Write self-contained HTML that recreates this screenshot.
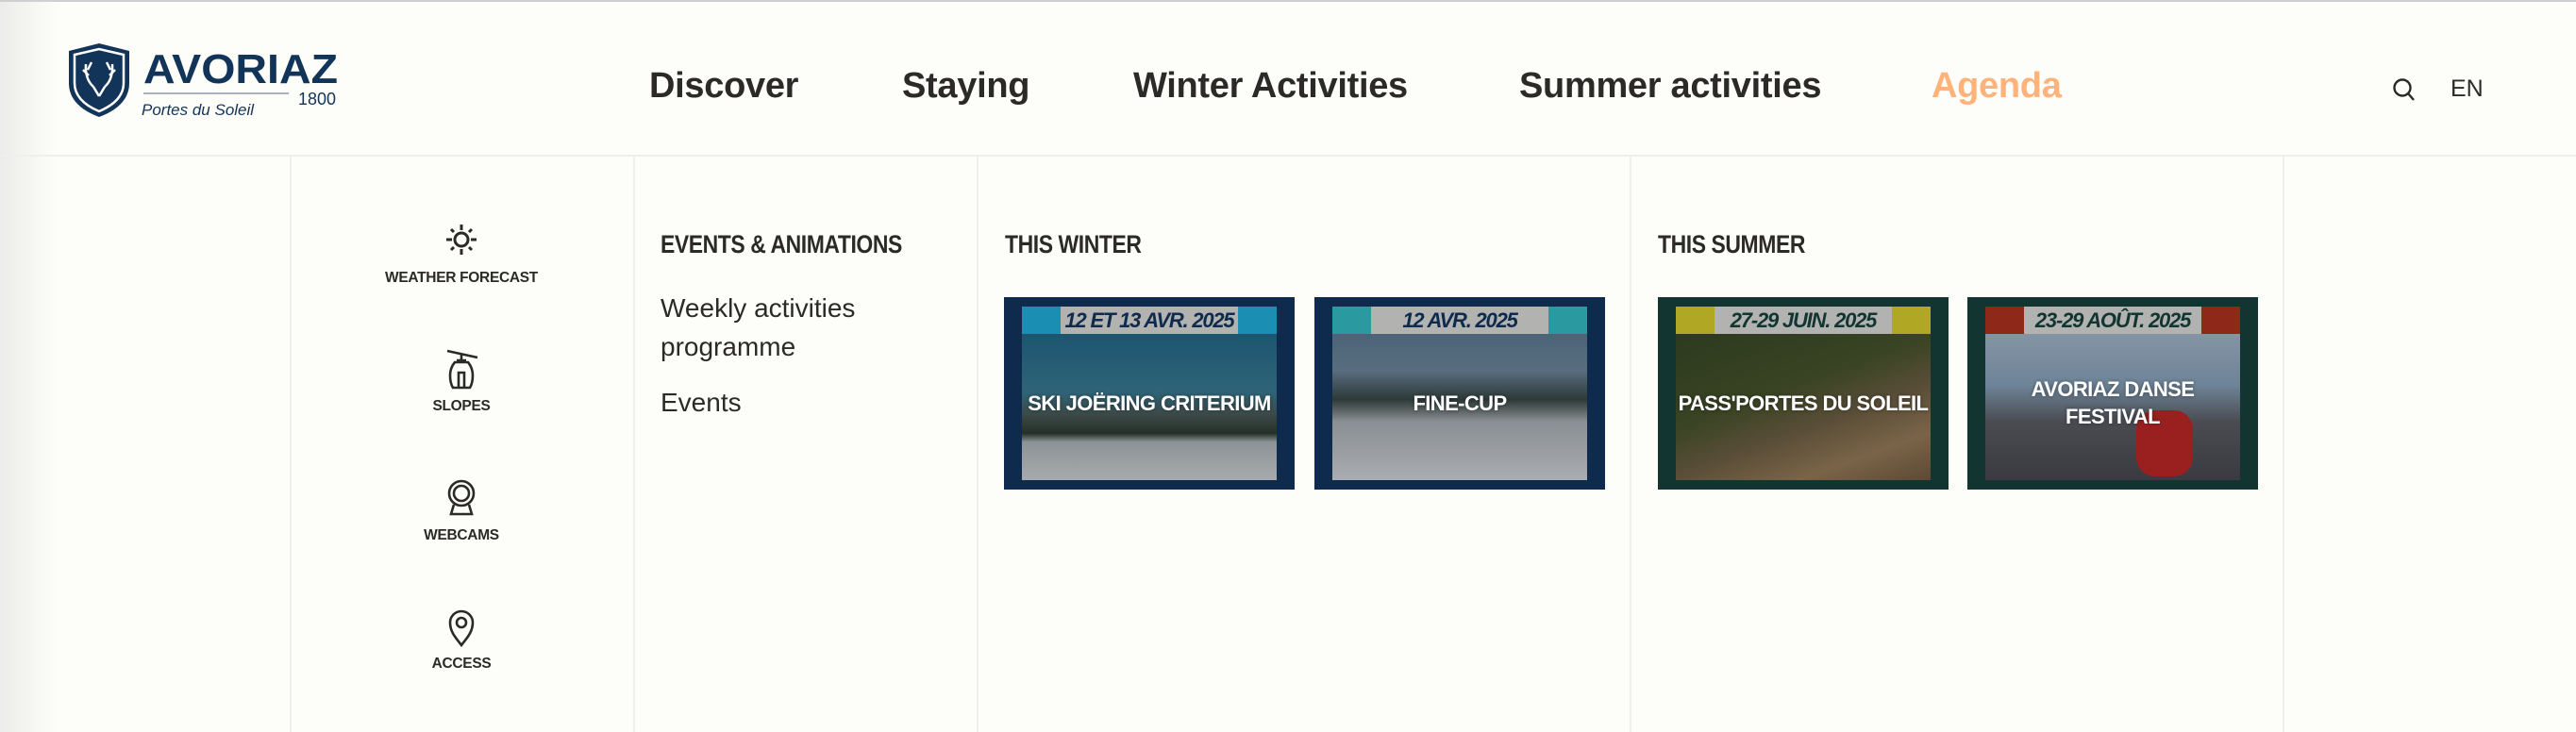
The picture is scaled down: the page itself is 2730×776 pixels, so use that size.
<!DOCTYPE html>
<html><head><meta charset="utf-8"><style>
*{margin:0;padding:0;box-sizing:border-box}
body{width:2730px;height:776px;background:#fdfdf9;font-family:"Liberation Sans",sans-serif;color:#2b2a28;position:relative;overflow:hidden}
.a{position:absolute}
.nav{top:70px;font-size:38px;font-weight:bold;letter-spacing:-0.3px;white-space:nowrap}
.vl{position:absolute;top:165px;bottom:0;width:2px;background:#efefeb}
.lab{position:absolute;width:300px;left:339px;text-align:center;font-size:15.5px;font-weight:bold;letter-spacing:-0.3px}
.ico{position:absolute;left:465px;width:48px;height:48px}
.hd{font-family:"Liberation Sans Narrow","Liberation Sans",sans-serif;font-weight:bold;font-size:27px;letter-spacing:-0.5px;transform:scaleX(.85);transform-origin:left}
.lk{font-size:28px;left:700px}
.card{position:absolute;top:315px;width:308px;height:204px;padding:10px 19px}
.inner{position:relative;width:100%;height:100%;overflow:hidden}
.bar{position:absolute;left:0;right:0;top:0;height:29px}
.date{position:absolute;top:0;height:29px;left:50%;transform:translateX(-50%);width:188px;background:#b2b2b0;text-align:center;font-style:italic;font-weight:bold;font-size:22px;line-height:29px;letter-spacing:-1.2px;white-space:nowrap}
.img{position:absolute;left:0;right:0;top:29px;bottom:0}
.tt{position:absolute;left:-16px;right:-16px;top:20px;bottom:0;display:flex;align-items:center;justify-content:center;text-align:center;color:#fff;font-weight:bold;font-size:22px;line-height:29px;letter-spacing:-0.6px;text-shadow:0 0 4px rgba(0,0,0,.4)}
</style></head><body>
<div class="a" style="left:0;top:0;width:2730px;height:2px;background:#cfcfcf"></div>
<div class="a" style="left:0;top:2px;width:60px;height:774px;background:linear-gradient(90deg,#ececea,#fdfdf9)"></div>
<div class="a" style="left:0;top:164px;width:2730px;height:2px;background:#efefeb"></div>

<svg class="a" style="left:70px;top:44px" width="300" height="82" viewBox="0 0 300 82">
<path d="M3 10 L35 2 L67 10 L67 44 Q67 68 35 80 Q3 68 3 44 Z" fill="#123458"/>
<path d="M9 14 L35 8 L61 14 L61 44 Q61 63 35 74 Q9 63 9 44 Z" fill="none" stroke="#fff" stroke-width="2.5"/>
<path d="M35 58 L29 48 M35 58 L41 48 M29 48 Q20 40 21 24 M41 48 Q50 40 49 24 M24 36 L18 30 M46 36 L52 30 M23 30 L27 22 M47 30 L43 22" stroke="#fff" stroke-width="2.5" fill="none"/>
<text x="82" y="44" font-family="Liberation Sans" font-weight="bold" font-size="44" fill="#123458" letter-spacing="0" textLength="206" lengthAdjust="spacingAndGlyphs">AVORIAZ</text>
<line x1="82" y1="55" x2="236" y2="55" stroke="#8a9ab0" stroke-width="1.5"/>
<text x="80" y="78" font-family="Liberation Sans Narrow,Liberation Sans" font-style="italic" font-size="17" fill="#123458">Portes du Soleil</text>
<text x="246" y="67" font-family="Liberation Sans" font-size="18" fill="#123458">1800</text>
</svg>

<div class="a nav" style="left:688px">Discover</div>
<div class="a nav" style="left:956px">Staying</div>
<div class="a nav" style="left:1201px">Winter Activities</div>
<div class="a nav" style="left:1610px">Summer activities</div>
<div class="a nav" style="left:2047px;color:#ffb27a">Agenda</div>
<svg class="a" style="left:2535px;top:82px" width="26" height="26" viewBox="0 0 26 26"><circle cx="11" cy="11" r="8.5" fill="none" stroke="#2b2a28" stroke-width="2.4"/><line x1="17" y1="17" x2="23" y2="24" stroke="#2b2a28" stroke-width="2.4"/></svg>
<div class="a" style="left:2597px;top:80px;font-size:25px">EN</div>

<div class="vl" style="left:307px"></div>
<div class="vl" style="left:671px"></div>
<div class="vl" style="left:1035px"></div>
<div class="vl" style="left:1727px"></div>
<div class="vl" style="left:2419px"></div>

<svg class="ico" style="top:230px" viewBox="0 0 48 48" fill="none" stroke="#2b2a28" stroke-width="3"><circle cx="24" cy="24" r="7"/><path d="M24 8v6M24 34v6M8 24h6M34 24h6M13 13l3 3M35 13l-3 3M13 35l3-3M35 35l-3-3"/></svg>
<div class="lab" style="top:286px">WEATHER FORECAST</div>
<svg class="ico" style="top:368px" viewBox="0 0 48 48" fill="none" stroke="#2b2a28" stroke-width="2.6"><path d="M9 4l32 7M24 8v6M19 14h10"/><path d="M17 16h14q5 6 5 14t-3 13H15q-3-5-3-13t5-14z"/><path d="M21 43V27h6v16"/></svg>
<div class="lab" style="top:422px">SLOPES</div>
<svg class="ico" style="top:502px" viewBox="0 0 48 48" fill="none" stroke="#2b2a28" stroke-width="2.6"><circle cx="24" cy="21" r="13"/><circle cx="24" cy="21" r="8"/><path d="M16 33l-3 10h22l-3-10"/></svg>
<div class="lab" style="top:559px">WEBCAMS</div>
<svg class="ico" style="top:640px" viewBox="0 0 48 48" fill="none" stroke="#2b2a28" stroke-width="2.6"><path d="M24 44C18 36 12 30 12 20a12 12 0 0124 0c0 10-6 16-12 24z"/><circle cx="24" cy="20" r="5"/></svg>
<div class="lab" style="top:695px">ACCESS</div>

<div class="a hd" style="left:700px;top:244px">EVENTS &amp; ANIMATIONS</div>
<div class="a lk" style="top:311px">Weekly activities</div>
<div class="a lk" style="top:352px">programme</div>
<div class="a lk" style="top:411px">Events</div>

<div class="a hd" style="left:1065px;top:244px">THIS WINTER</div>
<div class="a hd" style="left:1757px;top:244px">THIS SUMMER</div>

<div class="card" style="left:1064px;background:#0e2a4c"><div class="inner">
<div class="img" style="background:linear-gradient(180deg,#1d5570 0%,#2f6478 40%,#3c4a48 55%,#253028 68%,#8c9396 74%,#a8abad 100%)"></div>
<div class="bar" style="background:#1a8fb3"></div><div class="date" style="color:#0e2a4c">12 ET 13 AVR. 2025</div>
<div class="tt">SKI JOËRING CRITERIUM</div></div></div>

<div class="card" style="left:1393px;background:#0e2a4c"><div class="inner">
<div class="img" style="background:linear-gradient(180deg,#4c6478 0%,#586d80 25%,#2e3a38 45%,#8a8f94 60%,#a9acb0 100%)"></div>
<div class="bar" style="background:#2a9aa0"></div><div class="date" style="color:#0e2a4c">12 AVR. 2025</div>
<div class="tt">FINE-CUP</div></div></div>

<div class="card" style="left:1757px;background:#133531"><div class="inner">
<div class="img" style="background:linear-gradient(160deg,#2c3a1e 0%,#3a4424 40%,#5a4e38 60%,#7a6448 80%,#5c4a34 100%)"></div>
<div class="bar" style="background:#b0a824"></div><div class="date" style="color:#133531">27-29 JUIN. 2025</div>
<div class="tt">PASS'PORTES DU SOLEIL</div></div></div>

<div class="card" style="left:2085px;background:#133531"><div class="inner">
<div class="img" style="background:linear-gradient(180deg,#8494a4 0%,#6e8498 35%,#4a4c52 60%,#3a3a40 100%)"></div>
<div class="a" style="left:160px;top:110px;width:60px;height:70px;background:#9a2020;border-radius:20px"></div>
<div class="bar" style="background:#8e2818"></div><div class="date" style="color:#133531">23-29 AOÛT. 2025</div>
<div class="tt">AVORIAZ DANSE<br>FESTIVAL</div></div></div>
</body></html>
